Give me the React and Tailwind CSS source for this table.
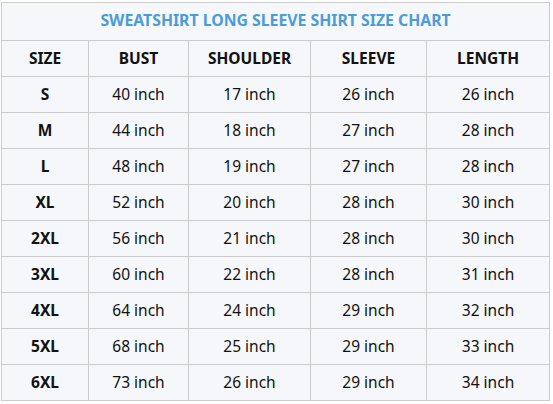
const headers = ["SIZE", "BUST", "SHOULDER", "SLEEVE", "LENGTH"];

const rows = [
  ["S", 40, 17, 26, 26],
  ["M", 44, 18, 27, 28],
  ["L", 48, 19, 27, 28],
  ["XL", 52, 20, 28, 30],
  ["2XL", 56, 21, 28, 30],
  ["3XL", 60, 22, 28, 31],
  ["4XL", 64, 24, 29, 32],
  ["5XL", 68, 25, 29, 33],
  ["6XL", 73, 26, 29, 34],
];

export default function App() {
  return (
    <div
      className="bg-white min-h-screen pt-[2px] pl-[1px]"
      style={{ fontFamily: '"Noto Sans", "Open Sans", sans-serif' }}
    >
      <table className="w-[548px] table-fixed border-collapse bg-[#f5f7fa] text-[15.5px] text-[#111]">
        <colgroup>
          <col className="w-[87px]" />
          <col className="w-[100px]" />
          <col className="w-[122px]" />
          <col className="w-[116px]" />
          <col className="w-[123px]" />
        </colgroup>
        <thead>
          <tr>
            <th
              colSpan={5}
              className="h-[38px] border border-[#cccccc] pb-[1px] text-center text-[15.8px] font-bold text-[#4b9cd9]"
            >
              SWEATSHIRT LONG SLEEVE SHIRT SIZE CHART
            </th>
          </tr>
          <tr>
            {headers.map((h) => (
              <th
                key={h}
                className="h-[36px] border border-[#cccccc] text-center font-bold"
              >
                {h}
              </th>
            ))}
          </tr>
        </thead>
        <tbody>
          {rows.map(([size, ...vals]) => (
            <tr key={size}>
              <td className="h-[36px] border border-[#cccccc] text-center font-bold">
                {size}
              </td>
              {vals.map((v, i) => (
                <td
                  key={i}
                  className="h-[36px] border border-[#cccccc] text-center"
                >
                  {v} inch
                </td>
              ))}
            </tr>
          ))}
        </tbody>
      </table>
    </div>
  );
}
